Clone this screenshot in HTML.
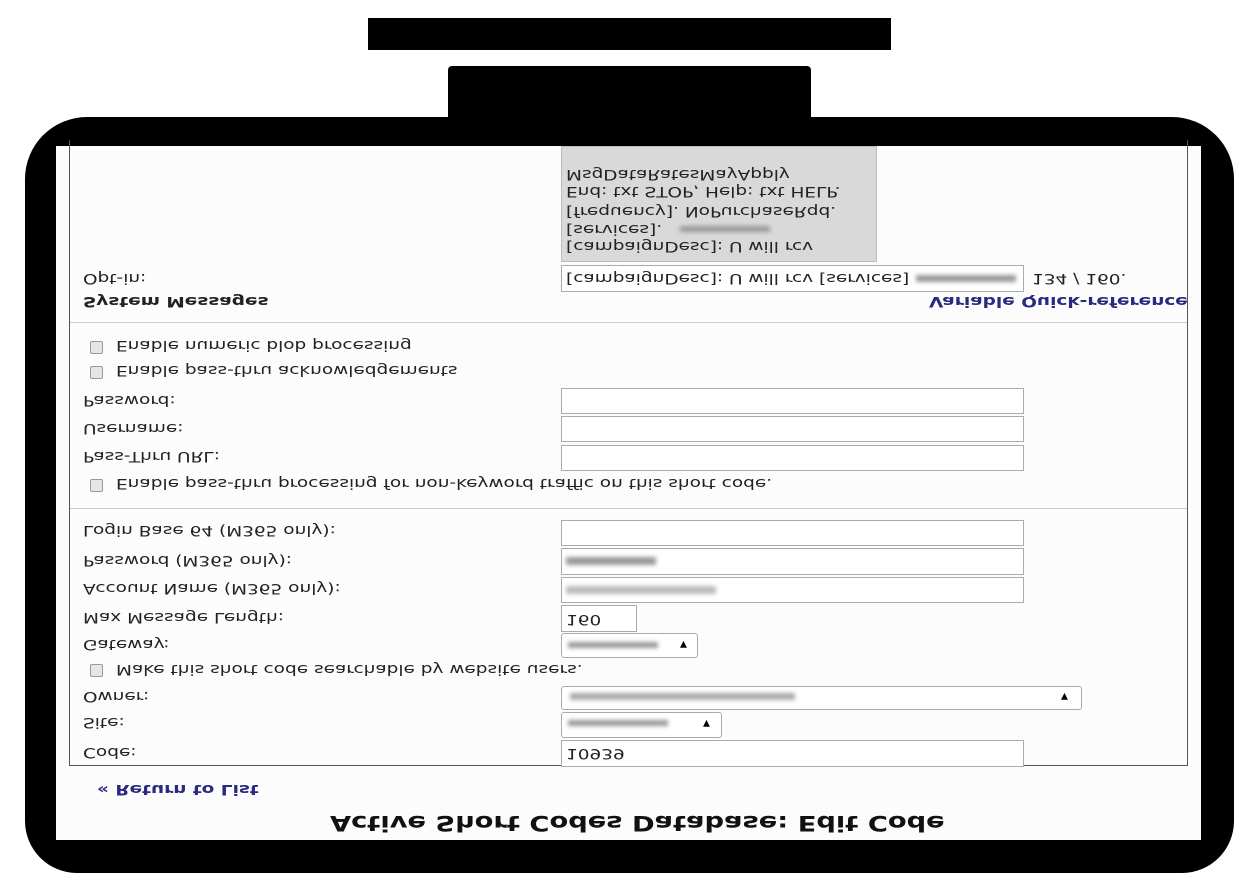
<!DOCTYPE html>
<html><head><meta charset="utf-8"><style>
html,body{margin:0;padding:0;background:#fff;}
body{width:1259px;height:890px;position:relative;overflow:hidden;font-family:"DejaVu Sans","Liberation Sans",sans-serif;}
.a{position:absolute;}
.t{position:absolute;transform:scale(1.32,-1);transform-origin:0 50%;white-space:nowrap;font-size:14px;color:#222;line-height:16px;}
.in{position:absolute;background:#fff;border:1px solid #aaa;box-sizing:border-box;}
.cb{position:absolute;width:13px;height:13px;border:1px solid #999;background:#e6e6e6;border-radius:2px;box-sizing:border-box;}
.blur{position:absolute;background:#999;filter:blur(2px);height:6px;}
.arr{position:absolute;font-size:9px;transform:scaleY(-1);color:#000;}
.b{font-weight:bold;}
.blue{color:#2a2a80;font-weight:bold;}
</style></head><body>
<div class="a" style="left:368px;top:18px;width:523px;height:32px;background:#000"></div>
<div class="a" style="left:448px;top:66px;width:363px;height:70px;background:#000;border-radius:4px"></div>
<div class="a" style="left:25px;top:117px;width:1209px;height:756px;background:#000;border-radius:62px 62px 52px 52px"></div>
<div class="a" style="left:56px;top:146px;width:1145px;height:694px;background:#fcfcfd"></div>
<div class="a" style="left:69px;top:140px;width:1119px;height:626px;border:1px solid #555;border-top:none;box-sizing:border-box"></div>

<div class="a" style="left:561px;top:146px;width:316px;height:116px;background:#d9d9d9;border:1px solid #bbb;box-sizing:border-box"></div>
<div class="t" style="left:566px;top:166px">MsgDataRatesMayApply</div>
<div class="t" style="left:566px;top:183px">End: txt STOP, Help: txt HELP.</div>
<div class="t" style="left:566px;top:203px">[frequency]. NoPurchaseRqd.</div>
<div class="t" style="left:566px;top:221px">[services]. </div>
<div class="blur" style="left:680px;top:226px;width:90px"></div>
<div class="t" style="left:566px;top:238px">[campaignDesc]: U will rcv</div>

<div class="in" style="left:561px;top:265px;width:463px;height:27px"></div>
<div class="t" style="left:566px;top:270px">[campaignDesc]: U will rcv [services]</div>
<div class="blur" style="left:916px;top:275px;width:100px;height:7px"></div>
<div class="t" style="left:1032px;top:270px">134 / 160.</div>
<div class="t" style="left:83px;top:270px">Opt-in:</div>
<div class="t b" style="left:83px;top:293px">System Messages</div>
<div class="t blue" style="left:929px;top:293px">Variable Quick-reference</div>
<div class="a" style="left:70px;top:322px;width:1117px;height:1px;background:#ccc"></div>

<div class="cb" style="left:90px;top:341px"></div><div class="t" style="left:116px;top:337px">Enable numeric blob processing</div>
<div class="cb" style="left:90px;top:366px"></div><div class="t" style="left:116px;top:362px">Enable pass-thru acknowledgements</div>
<div class="t" style="left:83px;top:392px">Password:</div><div class="in" style="left:561px;top:388px;width:463px;height:26px"></div>
<div class="t" style="left:83px;top:420px">Username:</div><div class="in" style="left:561px;top:416px;width:463px;height:26px"></div>
<div class="t" style="left:83px;top:448px">Pass-Thru URL:</div><div class="in" style="left:561px;top:445px;width:463px;height:26px"></div>
<div class="cb" style="left:90px;top:479px"></div><div class="t" style="left:116px;top:475px">Enable pass-thru processing for non-keyword traffic on this short code.</div>
<div class="a" style="left:70px;top:508px;width:1117px;height:1px;background:#ccc"></div>

<div class="t" style="left:83px;top:522px">Login Base 64 (M365 only):</div><div class="in" style="left:561px;top:520px;width:463px;height:26px"></div>
<div class="t" style="left:83px;top:552px">Password (M365 only):</div><div class="in" style="left:561px;top:548px;width:463px;height:27px"></div>
<div class="blur" style="left:566px;top:557px;width:90px;height:8px"></div>
<div class="t" style="left:83px;top:580px">Account Name (M365 only):</div><div class="in" style="left:561px;top:577px;width:463px;height:26px"></div>
<div class="blur" style="left:566px;top:586px;width:150px;height:8px;background:#bbb"></div>
<div class="t" style="left:83px;top:609px">Max Message Length:</div><div class="in" style="left:561px;top:605px;width:76px;height:27px"></div>
<div class="t" style="left:566px;top:611px">160</div>
<div class="t" style="left:83px;top:636px">Gateway:</div><div class="in" style="left:561px;top:633px;width:137px;height:25px;border-radius:3px"></div>
<div class="blur" style="left:568px;top:642px;width:90px;height:6px"></div><div class="arr" style="left:680px;top:639px">▼</div>
<div class="cb" style="left:90px;top:664px"></div><div class="t" style="left:116px;top:661px">Make this short code searchable by website users.</div>
<div class="t" style="left:83px;top:688px">Owner:</div><div class="in" style="left:561px;top:686px;width:521px;height:24px;border-radius:3px"></div>
<div class="blur" style="left:570px;top:693px;width:225px;height:7px;background:#aaa"></div><div class="arr" style="left:1061px;top:691px">▼</div>
<div class="t" style="left:83px;top:714px">Site:</div><div class="in" style="left:561px;top:712px;width:161px;height:26px;border-radius:3px"></div>
<div class="blur" style="left:568px;top:720px;width:100px;height:6px"></div><div class="arr" style="left:703px;top:718px">▼</div>
<div class="t" style="left:83px;top:744px">Code:</div><div class="in" style="left:561px;top:740px;width:463px;height:27px"></div>
<div class="t" style="left:566px;top:745px">10939</div>

<div class="t blue" style="left:97px;top:781px">« Return to List</div>
<div class="t b" style="left:330px;top:811px;font-size:21px;line-height:24px;color:#111;transform:scale(1.3,-1)">Active Short Codes Database: Edit Code</div>
</body></html>
